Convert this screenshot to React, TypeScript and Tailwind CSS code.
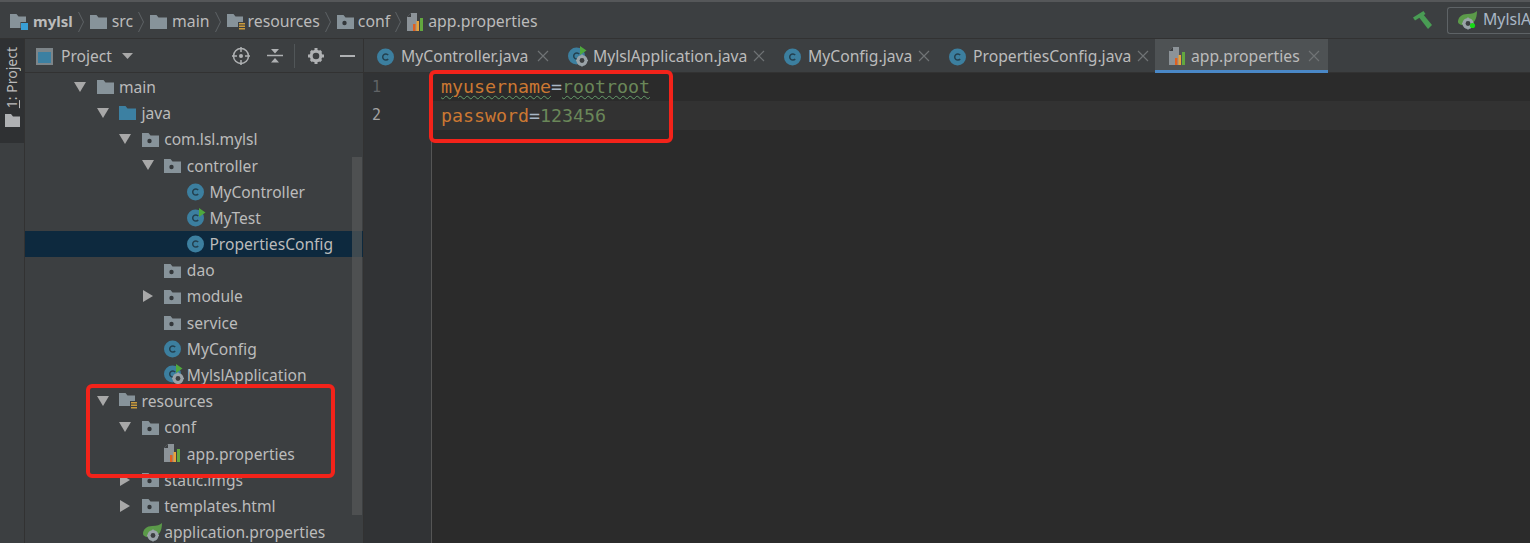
import React from "react";

type IconKind = "folder" | "pkg" | "java" | "res" | "cls" | "test" | "run" | "spring" | "props";

function Folder({ color = "#87939a", dot = false }: { color?: string; dot?: boolean }) {
  return (
    <svg width="17" height="15" viewBox="0 0 17 15" className="shrink-0">
      <path d="M0 1h6.500l2 2.500H17V15H0z" fill={color} />
      {dot && <circle cx="7.500" cy="9" r="2.200" fill="#33373a" />}
    </svg>
  );
}

function ResFolder() {
  return (
    <svg width="18" height="17" viewBox="0 0 18 17" className="shrink-0">
      <path d="M0 1h6.500l2 2.500H16V14H0z" fill="#87939a" />
      <path d="M11 9h7v8h-7z" fill="#3c3f41" />
      <path d="M12 10h6v1.500h-6zM12 12.500h6V14h-6zM12 15h6v1.500h-6z" fill="#c99a3c" />
    </svg>
  );
}

function ModuleFolder() {
  return (
    <svg width="18" height="17" viewBox="0 0 18 17" className="shrink-0">
      <path d="M0 1h6.500l2 2.500H16V15H0z" fill="#87939a" />
      <path d="M10.500 9H18v8h-7.500z" fill="#3c3f41" />
      <path d="M11 10h7v7h-7z" fill="#389fd6" />
    </svg>
  );
}

function PropsIcon() {
  return (
    <svg width="17" height="18" viewBox="0 0 17 18" className="shrink-0">
      <path d="M4 0h6v18H0V4z" fill="#8c9398" />
      <path d="M4 0v4H0z" fill="#3c3f41" />
      <path d="M6 11h2.500v7H6z" fill="#e0601f" />
      <path d="M9.500 8H12v10H9.500z" fill="#e8a33a" />
      <path d="M13 5h3v13h-3z" fill="#62a73f" />
    </svg>
  );
}

function ClassIcon({ badge }: { badge?: "run" }) {
  return (
    <svg width="19" height="19" viewBox="0 0 19 19" className="shrink-0">
      <circle cx="8.500" cy="10" r="8.500" fill="#3c7f9f" />
      <path d="M11.200 8a3.100 3.100 0 1 0 0 4" fill="none" stroke="#23404f" strokeWidth="1.500" />
      {badge === "run" && <path d="M12 0l6.500 4.500L12 9z" fill="#4fa83d" />}
    </svg>
  );
}

function Gear({ x, y }: { x: number; y: number }) {
  return (
    <g transform={`translate(${x} ${y})`}>
      <circle r="5.500" fill="#9aa3a8" />
      <circle r="2.400" fill="#3c3f41" />
      <path d="M-.8-6h1.600v2H-.8zM-.8 4h1.600v2H-.8zM-6-.8h2V.8h-2zM4-.8h2V.8H4z" fill="#9aa3a8" />
    </g>
  );
}

function AppClassIcon() {
  return (
    <svg width="22" height="21" viewBox="0 0 22 21" className="shrink-0">
      <circle cx="8.500" cy="10" r="8.500" fill="#3c7f9f" />
      <path d="M11.200 8a3.100 3.100 0 1 0 0 4" fill="none" stroke="#23404f" strokeWidth="1.500" />
      <path d="M12 0l6.500 4.500L12 9z" fill="#4fa83d" />
      <Gear x={14} y={14.500} />
    </svg>
  );
}

function SpringIcon({ live }: { live?: boolean }) {
  return (
    <svg width="21" height="20" viewBox="0 0 21 20" className="shrink-0">
      <path d="M20 1c0 8-3 13-9 14-6 1-10-1-10-3 0-5 4-8 9-8 5 0 8-1 10-3z" fill="#5b9a49" />
      <Gear x={11} y={13.500} />
      {live && <circle cx="15.500" cy="15.500" r="2.600" fill="#16d916" />}
    </svg>
  );
}

function TreeIcon({ kind }: { kind: IconKind }) {
  if (kind === "folder") return <Folder />;
  if (kind === "pkg") return <Folder dot />;
  if (kind === "java") return <Folder color="#3c80a2" />;
  if (kind === "res") return <ResFolder />;
  if (kind === "cls") return <ClassIcon />;
  if (kind === "test") return <ClassIcon badge="run" />;
  if (kind === "run") return <AppClassIcon />;
  if (kind === "spring") return <SpringIcon />;
  return <PropsIcon />;
}

function Arrow({ open }: { open: boolean }) {
  return (
    <svg width="12" height="12" viewBox="0 0 12 12">
      {open ? <path d="M0 1h12L6 11z" fill="#a8a8a8" /> : <path d="M1 0l10 6-10 6z" fill="#a8a8a8" />}
    </svg>
  );
}

function Chevron() {
  return (
    <svg width="7" height="22" viewBox="0 0 7 22" className="mx-[5px] shrink-0">
      <path d="M.5 1l5 10-5 10" fill="none" stroke="#5e6366" strokeWidth="1" />
    </svg>
  );
}

const rows: { depth: number; arrow?: boolean; open?: boolean; icon: IconKind; label: string; selected?: boolean }[] = [
  { depth: 0, arrow: true, open: true, icon: "folder", label: "main" },
  { depth: 1, arrow: true, open: true, icon: "java", label: "java" },
  { depth: 2, arrow: true, open: true, icon: "pkg", label: "com.lsl.mylsl" },
  { depth: 3, arrow: true, open: true, icon: "pkg", label: "controller" },
  { depth: 4, icon: "cls", label: "MyController" },
  { depth: 4, icon: "test", label: "MyTest" },
  { depth: 4, icon: "cls", label: "PropertiesConfig", selected: true },
  { depth: 3, icon: "pkg", label: "dao" },
  { depth: 3, arrow: true, icon: "pkg", label: "module" },
  { depth: 3, icon: "pkg", label: "service" },
  { depth: 3, icon: "cls", label: "MyConfig" },
  { depth: 3, icon: "run", label: "MylslApplication" },
  { depth: 1, arrow: true, open: true, icon: "res", label: "resources" },
  { depth: 2, arrow: true, open: true, icon: "pkg", label: "conf" },
  { depth: 3, icon: "props", label: "app.properties" },
  { depth: 2, arrow: true, icon: "pkg", label: "static.imgs" },
  { depth: 2, arrow: true, icon: "pkg", label: "templates.html" },
  { depth: 2, icon: "spring", label: "application.properties" },
];

const tabs: { label: string; icon: "cls" | "run" | "props"; width: string; active?: boolean }[] = [
  { label: "MyController.java", icon: "cls", width: "w-[191px]" },
  { label: "MylslApplication.java", icon: "run", width: "w-[216px]" },
  { label: "MyConfig.java", icon: "cls", width: "w-[165px]" },
  { label: "PropertiesConfig.java", icon: "cls", width: "w-[219px]" },
  { label: "app.properties", icon: "props", width: "w-[173px]", active: true },
];

function Breadcrumb() {
  return (
    <div className="relative flex h-[39px] shrink-0 items-center border-t-2 border-b border-t-[#555759] border-b-[#323232] pl-[10px] pr-0 pt-[3px] text-[15.8px] text-[#bbbbbb]">
      <ModuleFolder />
      <span className="ml-[5px] text-[15px] font-bold">mylsl</span>
      <Chevron />
      <Folder />
      <span className="ml-[5px]">src</span>
      <Chevron />
      <Folder />
      <span className="ml-[5px]">main</span>
      <Chevron />
      <ResFolder />
      <span className="ml-[3px]">resources</span>
      <Chevron />
      <Folder dot />
      <span className="ml-[4px]">conf</span>
      <Chevron />
      <PropsIcon />
      <span className="ml-[4px]">app.properties</span>
      <div className="mb-[3px] ml-auto flex items-center">
        <svg width="19" height="18" viewBox="0 0 19 18">
          <path d="M0 6.500L10.500 0l2 3L2 9.500z" fill="#499c54" />
          <path d="M5 5l4.500-2.500L19 14l-4 4z" fill="#499c54" />
        </svg>
        <div className="ml-[15px] flex h-[27px] w-[83px] items-center overflow-hidden rounded-l-[3px] border border-r-0 border-[#5e6366] pl-[9px] text-[#a9b7c6]">
          <SpringIcon live />
          <span className="ml-[5px]">MylslApplication</span>
        </div>
      </div>
    </div>
  );
}

function Sidebar() {
  return (
    <aside className="relative flex w-[339px] shrink-0 flex-col border-r border-[#323232] text-[15.6px] text-[#bbbbbb]">
      <div className="flex h-[34px] shrink-0 items-center border-b border-[#323232] pl-[11px] pt-[1px]">
        <svg width="17" height="17" viewBox="0 0 17 17" className="shrink-0">
          <path d="M0 0h17v17H0z" fill="#7d8589" />
          <path d="M2 4h13v11H2z" fill="#3c80a2" />
        </svg>
        <span className="ml-[8px] pt-[2px]">Project</span>
        <svg width="11" height="6" viewBox="0 0 11 6" className="ml-[10px]">
          <path d="M0 0h11L5.500 6z" fill="#a8a8a8" />
        </svg>
        <svg width="18" height="18" viewBox="0 0 18 18" className="ml-[99px]">
          <circle cx="9" cy="9" r="7.500" fill="none" stroke="#afb1b3" strokeWidth="1.500" />
          <circle cx="9" cy="9" r="2" fill="#afb1b3" />
          <path d="M9 0v5M9 13v5M0 9h5M13 9h5" stroke="#afb1b3" strokeWidth="1.500" />
        </svg>
        <svg width="16" height="16" viewBox="0 0 16 16" className="ml-[17px]">
          <path d="M0 7.500h16" stroke="#afb1b3" strokeWidth="1.500" />
          <path d="M4 1h8L8 5.500zM8 10l4 4.500H4z" fill="#afb1b3" />
        </svg>
        <div className="ml-[11px] h-[24px] w-px bg-[#515658]" />
        <svg width="16" height="16" viewBox="0 0 16 16" className="ml-[13px]">
          <circle cx="8" cy="8" r="4.800" fill="none" stroke="#afb1b3" strokeWidth="3" />
          <path d="M6.500 0h3v3h-3zM6.500 13h3v3h-3zM0 6.500h3v3H0zM13 6.500h3v3h-3zM1.800 3.900L3.900 1.800 6 3.900 3.900 6zM10 12.100l2.100-2.100 2.100 2.100-2.100 2.100zM12.100 1.800l2.100 2.100L12.100 6 10 3.900zM3.900 10L6 12.100 3.900 14.200 1.800 12.100z" fill="#afb1b3" />
        </svg>
        <div className="ml-[16px] h-[2px] w-[15px] bg-[#afb1b3]" />
      </div>
      <div className="flex flex-col overflow-hidden pt-[0.6px]">
        {rows.map((row) => (
          <div
            key={row.label}
            className={`flex h-[26.2px] shrink-0 items-center ${row.selected ? "bg-[#0d293e]" : ""}`}
            style={{ paddingLeft: 49 + row.depth * 22.6 }}
          >
            <span className="flex w-[22.5px] shrink-0 items-center">{row.arrow && <Arrow open={!!row.open} />}</span>
            <span className="flex w-[22.5px] shrink-0 items-center">
              <TreeIcon kind={row.icon} />
            </span>
            <span className="whitespace-nowrap pt-[2px]">{row.label}</span>
          </div>
        ))}
      </div>
      <div className="absolute left-[327px] top-[118px] h-[358px] w-[10px] bg-[#565859]/70" />
    </aside>
  );
}

function Tabs() {
  return (
    <div className="flex h-[34px] shrink-0 border-b border-[#323232] text-[15.7px] text-[#bbbbbb]">
      {tabs.map((tab) => (
        <div
          key={tab.label}
          className={`relative flex h-[34px] shrink-0 items-center pl-[13px] pr-[6px] ${tab.width} ${tab.active ? "bg-[#4e5254] pl-[14px] pr-[8px]" : ""}`}
        >
          {tab.icon === "cls" && <ClassIcon />}
          {tab.icon === "run" && <AppClassIcon />}
          {tab.icon === "props" && <PropsIcon />}
          <span className={`whitespace-nowrap pt-[2px] ${tab.icon === "run" ? "ml-[3px]" : "ml-[5px]"}`}>{tab.label}</span>
          <svg width="12" height="12" viewBox="0 0 12 12" className="ml-auto">
            <path d="M1 1l10 10M11 1L1 11" stroke="#6f7375" strokeWidth="1.200" />
          </svg>
          {tab.active && <div className="absolute inset-x-0 bottom-0 h-[3px] bg-[#4a88c7]" />}
        </div>
      ))}
    </div>
  );
}

function Editor() {
  return (
    <main className="relative flex min-w-0 flex-1 flex-col">
      <Tabs />
      <div className="flex flex-1 bg-[#2b2b2b] font-['DejaVu_Sans_Mono',monospace] text-[18.27px]">
        <div className="flex w-[68px] shrink-0 flex-col border-r border-[#555555] bg-[#313335] pl-[8px] text-[15px] text-[#606366]">
          <div className="flex h-[28px] items-center">1</div>
          <div className="flex h-[29px] items-center text-[#a4a3a3]">2</div>
        </div>
        <div className="flex flex-1 flex-col">
          <div className="flex h-[28px] items-center pl-[9px]">
            <span className="text-[#cc7832] underline decoration-wavy decoration-[#659c6b] decoration-1 underline-offset-2">myusername</span>
            <span className="text-[#a9b7c6]">=</span>
            <span className="text-[#6a8759] underline decoration-wavy decoration-[#659c6b] decoration-1 underline-offset-2">rootroot</span>
          </div>
          <div className="flex h-[29px] items-center bg-[#323232] pl-[9px]">
            <span className="text-[#cc7832]">password</span>
            <span className="text-[#a9b7c6]">=</span>
            <span className="text-[#6a8759]">123456</span>
          </div>
        </div>
      </div>
    </main>
  );
}

export default function App() {
  return (
    <div className="relative flex h-[543px] w-[1530px] flex-col overflow-hidden bg-[#3c3f41] font-['Noto_Sans',sans-serif]">
      <Breadcrumb />
      <div className="flex min-h-0 flex-1">
        <div className="flex w-[25px] shrink-0 flex-col border-r border-[#323232]">
          <div className="flex h-[104px] flex-col items-center bg-[#2f3133] pt-[8px] text-[#bbbbbb]">
            <span className="rotate-180 text-[14px] leading-[16px] [writing-mode:vertical-rl]">
              <span className="underline">1</span>: Project
            </span>
            <svg width="15" height="13" viewBox="0 0 15 13" className="mt-[6px]">
              <path d="M0 0h6l2 2.500h7V13H0z" fill="#afb1b3" />
            </svg>
          </div>
        </div>
        <Sidebar />
        <Editor />
      </div>
      <div className="pointer-events-none absolute left-[429px] top-[70px] h-[73px] w-[244px] rounded-[6px] border-[4px] border-[#f3231a]" />
      <div className="pointer-events-none absolute left-[86px] top-[384px] h-[94px] w-[249px] rounded-[6px] border-[4px] border-[#f3231a]" />
    </div>
  );
}
